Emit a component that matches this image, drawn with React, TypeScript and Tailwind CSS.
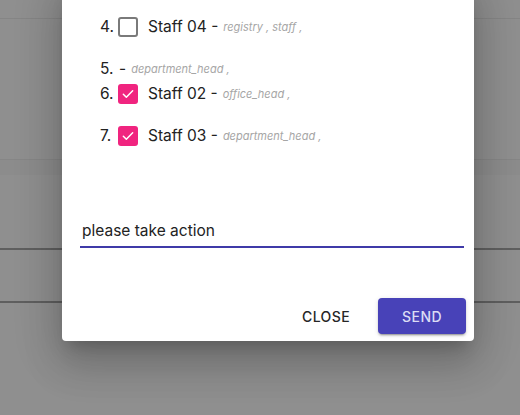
import React from "react";

const Check = ({ checked }: { checked: boolean }) =>
  checked ? (
    <div className="w-[20px] h-[20px] rounded-[3px] bg-[#f0247f] flex items-center justify-center">
      <svg width="16" height="16" viewBox="0 0 24 24">
        <path d="M5 12.5l4.5 4.5 9.5-10" fill="none" stroke="#ffffff" strokeWidth="2.2" strokeLinecap="round" strokeLinejoin="round" />
      </svg>
    </div>
  ) : (
    <div className="w-[20px] h-[20px] rounded-[3px] border-2 border-[#7a7a7a] bg-white" />
  );

const Roles = ({ text }: { text: string }) => (
  <span className="italic text-[11px] text-[#a6a6a6] ml-[5px]">{text}</span>
);

export default function App() {
  return (
    <div
      className="relative w-[520px] h-[415px] overflow-hidden bg-[#8f8f8f]"
      style={{ fontFamily: "Inter, 'Liberation Sans', sans-serif" }}
    >
      {/* background page */}
      <div className="flex flex-col">
        <div className="h-[19px] border-b border-[#858585]" />
        <div className="h-[141px] border-b border-[#868686]" />
        <div className="h-[15px] bg-[#8c8c8c]" />
        <div className="h-[75px] border-b-2 border-[#5f5f5f]" />
        <div className="h-[53px] border-b-2 border-[#5f5f5f]" />
      </div>

      {/* dialog */}
      <div className="absolute left-[62px] top-[-20px] w-[412px] h-[361px] bg-white rounded-[4px] shadow-[0_11px_15px_-7px_rgba(0,0,0,0.2),0_24px_38px_3px_rgba(0,0,0,0.14),0_9px_46px_8px_rgba(0,0,0,0.12)] flex flex-col">
        <div className="pt-[27px] pl-[38px] text-[#222222] text-[15.5px]">
          <div className="h-[40px] flex items-center">
            <span className="w-[18px]">4.</span>
            <Check checked={false} />
            <span className="ml-[10px]">Staff 04 -</span>
            <Roles text="registry , staff ," />
          </div>
          <div className="h-[24px] mt-[10px] flex items-center">
            <span className="w-[19px]">5.</span>
            <span>-</span>
            <Roles text="department_head ," />
          </div>
          <div className="h-[24px] mt-[1px] flex items-center">
            <span className="w-[18px]">6.</span>
            <Check checked={true} />
            <span className="ml-[10px]">Staff 02 -</span>
            <Roles text="office_head ," />
          </div>
          <div className="h-[40px] mt-[10px] flex items-center">
            <span className="w-[18px]">7.</span>
            <Check checked={true} />
            <span className="ml-[10px]">Staff 03 -</span>
            <Roles text="department_head ," />
          </div>
        </div>

        <div className="mt-[62px] ml-[18px] mr-[10px] border-b-2 border-[#3f3aa8] h-[30px] flex items-end pb-[4px]">
          <span className="ml-[2px] text-[15.5px] text-[#222222]">please take action</span>
        </div>

        <div className="mt-auto flex justify-end items-center gap-[12px] pr-[8px] pb-[7px]">
          <button className="h-[36px] px-[16px] text-[14px] font-medium tracking-[0.4px] text-[#262626]">
            CLOSE
          </button>
          <button className="h-[36px] w-[88px] rounded-[4px] bg-[#4842b8] text-[14px] font-medium tracking-[0.4px] text-[#dcdcf4] shadow-[0_3px_1px_-2px_rgba(0,0,0,0.2),0_2px_2px_0_rgba(0,0,0,0.14),0_1px_5px_0_rgba(0,0,0,0.12)]">
            SEND
          </button>
        </div>
      </div>
    </div>
  );
}
